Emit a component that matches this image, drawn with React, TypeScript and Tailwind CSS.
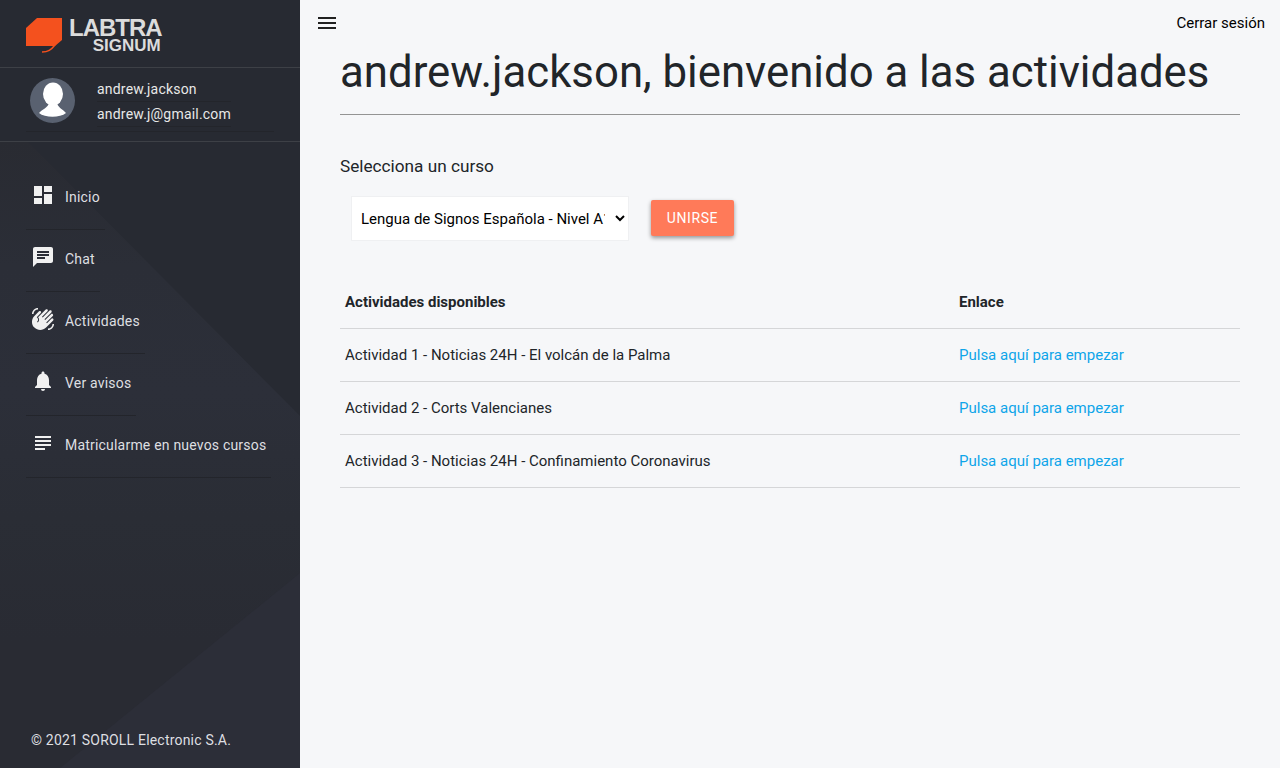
import React from 'react';
import { MdDashboard, MdChat, MdNotifications, MdSubject, MdWavingHand, MdMenu } from 'react-icons/md';

const navItems = [
    { label: 'Inicio', icon: <MdDashboard size={24} /> },
    { label: 'Chat', icon: <MdChat size={24} /> },
    { label: 'Actividades', icon: <MdWavingHand size={24} /> },
    { label: 'Ver avisos', icon: <MdNotifications size={24} /> },
    { label: 'Matricularme en nuevos cursos', icon: <MdSubject size={24} /> },
];

const activities = [
    'Actividad 1 - Noticias 24H - El volcán de la Palma',
    'Actividad 2 - Corts Valencianes',
    'Actividad 3 - Noticias 24H - Confinamiento Coronavirus',
];

function Logo() {
    return (
        <div className="flex items-start">
            <svg width="36" height="35" viewBox="0 0 36 35" className="shrink-0">
                <path d="M11 0H36V22L29 28H0V10Z" fill="#f4511e" />
                <path d="M16 34C22 34 25 32 29 27" stroke="#f4511e" strokeWidth="1.5" fill="none" />
            </svg>
            <div className="ml-[7px] flex flex-col items-end font-['Liberation_Sans',sans-serif] font-bold text-[#dcdcdc]">
                <span className="text-[24px] leading-[20px] tracking-[-1px]">LABTRA</span>
                <span className="text-[17px] leading-[15px] mr-[1px]">SIGNUM</span>
            </div>
        </div>
    );
}

function Sidebar() {
    return (
        <aside className="relative w-[300px] shrink-0 h-full flex flex-col bg-[#272a32] text-[#e8e8e8] overflow-hidden">
            <svg className="absolute inset-0 pointer-events-none" width="300" height="768" viewBox="0 0 300 768">
                <defs>
                    <linearGradient id="panel" x1="0" y1="142" x2="0" y2="768" gradientUnits="userSpaceOnUse">
                        <stop offset="0" stopColor="#292b32" />
                        <stop offset="0.2" stopColor="#2b2e37" />
                        <stop offset="0.4" stopColor="#2c2f39" />
                        <stop offset="0.6" stopColor="#2a2d35" />
                        <stop offset="0.8" stopColor="#292b33" />
                        <stop offset="1" stopColor="#292b33" />
                    </linearGradient>
                </defs>
                <path d="M0 142H28L300 416V768H0Z" fill="url(#panel)" />
                <path d="M300 573V768H60Z" fill="#2c2e38" />
            </svg>
            <div className="relative h-[68px] pt-[18px] pl-[26px] border-b border-[#3d4046]">
                <Logo />
            </div>
            <div className="relative h-[74px] border-b border-[#3d4046]">
                <div className="flex mx-[26px] h-[64px] border-b border-[#23252b]">
                    <div className="ml-1 mt-[10px] w-[45px] h-[45px] rounded-full bg-[#596170] flex items-center justify-center overflow-hidden">
                        <svg width="45" height="45" viewBox="0 0 45 45">
                            <ellipse cx="23" cy="16" rx="10" ry="11.5" fill="#fff" />
                            <path d="M9 35C12 31 18 30 19 25H27C28 30 33 31 36 35C30 40 15 40 9 35Z" fill="#fff" />
                        </svg>
                    </div>
                    <div className="ml-[22px] text-[14px] leading-[25px] tracking-[0.2px] font-['Roboto',sans-serif]">
                        <div className="mt-[9px] border-b border-[#23252b] h-[25px]">andrew.jackson</div>
                        <div className="border-b border-[#23252b] h-[25px]">andrew.j@gmail.com</div>
                    </div>
                </div>
            </div>
            <nav className="relative pt-[26px] flex flex-col items-start pl-[26px] font-['Roboto',sans-serif]">
                {navItems.map((item) => (
                    <a
                        key={item.label}
                        href="#"
                        className="h-[62px] flex items-center pr-[5px] pb-[2px] border-b border-[#23252b] text-[14px] tracking-[0.2px] text-[#dedfe1]"
                    >
                        <span className="w-[33px] ml-[5px] mr-[1px] text-[#f0f0f0] mt-[-5px]">{item.icon}</span>
                        <span>{item.label}</span>
                    </a>
                ))}
            </nav>
            <div className="relative mt-auto mb-[20px] ml-[31px] text-[14px] leading-[16px] tracking-[0.2px] text-[#dedfe1] font-['Roboto',sans-serif]">
                © 2021 SOROLL Electronic S.A.
            </div>
        </aside>
    );
}

export default function App() {
    return (
        <div className="w-[1280px] h-[768px] flex overflow-hidden bg-[#f6f7f9] font-['Roboto',sans-serif]">
            <Sidebar />
            <main className="flex-1 flex flex-col">
                <header className="flex items-center justify-between h-[46px] pl-[15px] pr-[15px] text-[15px] text-black">
                    <MdMenu size={24} className="text-[#212121]" />
                    <a href="#">Cerrar sesión</a>
                </header>
                <div className="pl-[40px] pr-[40px]">
                    <h1 className="text-[43.75px] leading-[52px] text-[#212529] border-b border-[#949494] pb-[16px] h-[69px]">
                        andrew.jackson, bienvenido a las actividades
                    </h1>
                    <p className="mt-[39px] text-[17.2px] leading-[24px] text-[#212529]">Selecciona un curso</p>
                    <div className="flex items-start mt-[18px] ml-[11px]">
                        <select className="w-[278px] h-[45px] bg-white border border-[#eff0f2] pl-[5px] pr-[7px] text-[15px] text-black">
                            <option>Lengua de Signos Española - Nivel A1</option>
                        </select>
                        <button className="ml-[22px] mt-[4px] w-[83px] h-[36px] rounded-[2px] bg-[#ff7a59] text-white text-[14px] tracking-[0.6px] shadow-[0_2px_4px_rgba(0,0,0,0.4)]">
                            UNIRSE
                        </button>
                    </div>
                    <table className="w-full mt-[34px] text-[15px] text-[#212529] border-collapse">
                        <thead>
                            <tr className="h-[53px] border-b border-[#d5d6d8] text-left">
                                <th className="w-[614px] pl-[5px] pt-[2px] font-bold">Actividades disponibles</th>
                                <th className="pl-[5px] pt-[2px] font-bold">Enlace</th>
                            </tr>
                        </thead>
                        <tbody>
                            {activities.map((activity) => (
                                <tr key={activity} className="h-[53px] border-b border-[#d5d6d8]">
                                    <td className="pl-[5px] pt-[2px]">{activity}</td>
                                    <td className="pl-[5px] pt-[2px]">
                                        <a href="#" className="text-[#0ea5e9]">Pulsa aquí para empezar</a>
                                    </td>
                                </tr>
                            ))}
                        </tbody>
                    </table>
                </div>
            </main>
        </div>
    );
}
